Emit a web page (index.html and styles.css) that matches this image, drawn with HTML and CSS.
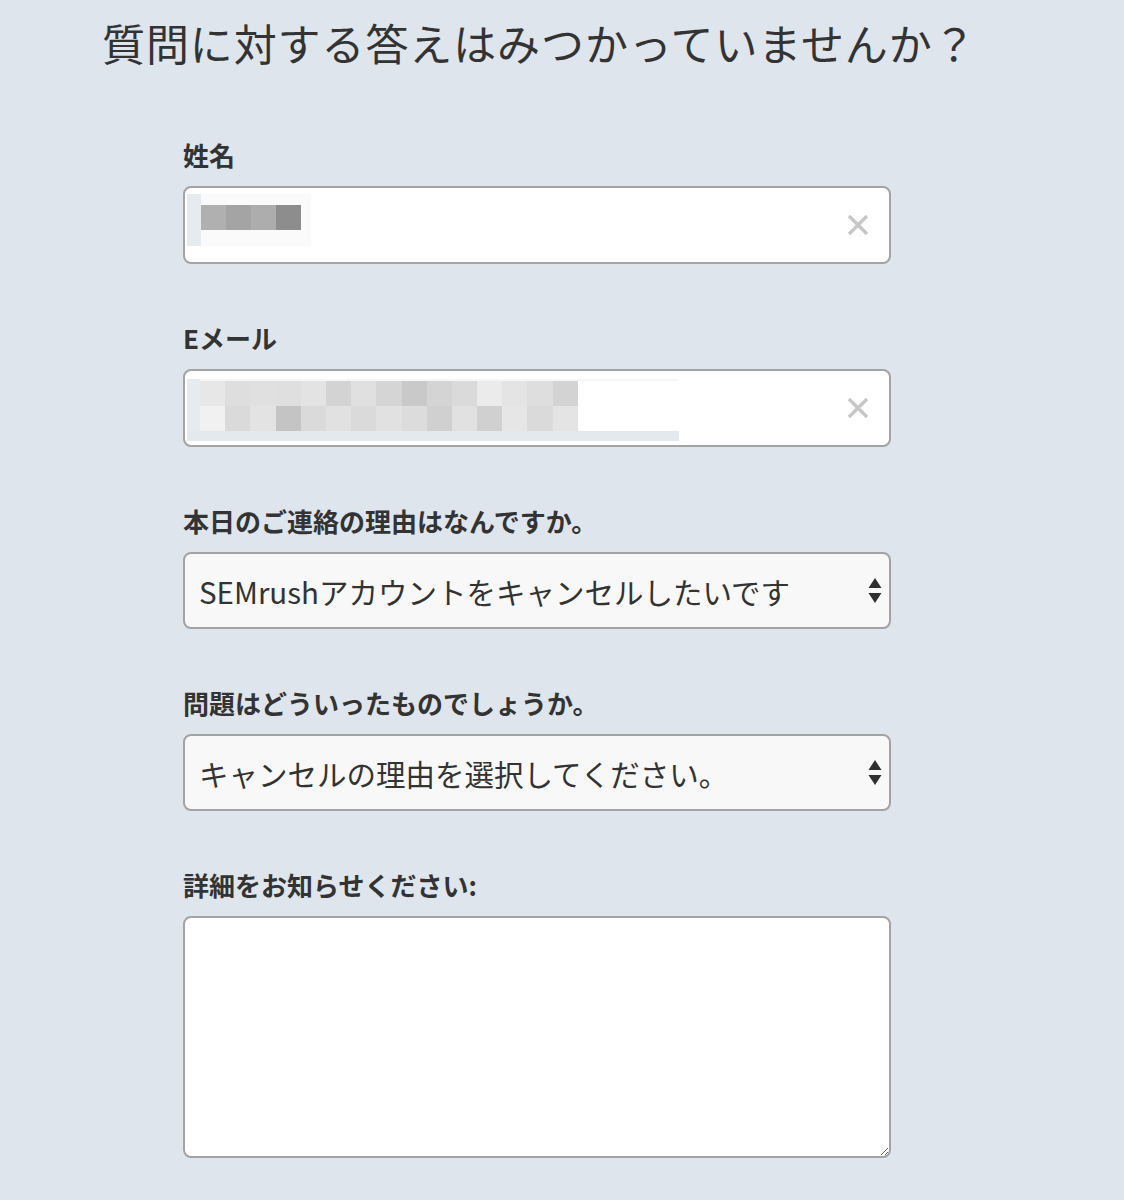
FILE: index.html
```html
<!DOCTYPE html>
<html lang="ja">
<head>
<meta charset="utf-8">
<title>お問い合わせ</title>
<link rel="stylesheet" href="styles.css">
</head>
<body>
<div class="page">
  <h1 class="title">質問に対する答えはみつかっていませんか？</h1>
  <form class="form">
    <div class="field">
      <label class="label">姓名</label>
      <div class="box text-box">
        <div class="redact-name">
          <span class="cell" style="background:#b0b0b0"></span><span class="cell" style="background:#a4a4a4"></span><span class="cell" style="background:#adadad"></span><span class="cell" style="background:#8d8d8d"></span>
        </div>
        <svg class="clear" width="22" height="22" viewBox="0 0 22 22"><path d="M2 2 L20 20 M20 2 L2 20" stroke="#c6c6c6" stroke-width="3.2" stroke-linecap="butt"/></svg>
      </div>
    </div>

    <div class="field">
      <label class="label">Eメール</label>
      <div class="box text-box">
        <div class="redact-mail">
          <div class="mail-row">
            <span class="mc" style="background:#e7e7e7"></span><span class="mc" style="background:#dedede"></span><span class="mc" style="background:#e0e0e0"></span><span class="mc" style="background:#dfdfdf"></span><span class="mc" style="background:#e3e3e3"></span><span class="mc" style="background:#d3d3d3"></span><span class="mc" style="background:#e0e0e0"></span><span class="mc" style="background:#d5d5d5"></span><span class="mc" style="background:#c9c9c9"></span><span class="mc" style="background:#d4d4d4"></span><span class="mc" style="background:#dadada"></span><span class="mc" style="background:#ebebeb"></span><span class="mc" style="background:#e4e4e4"></span><span class="mc" style="background:#dedede"></span><span class="mc" style="background:#d3d3d3"></span>
          </div>
          <div class="mail-row">
            <span class="mc" style="background:#f1f1f1"></span><span class="mc" style="background:#dadada"></span><span class="mc" style="background:#e3e3e3"></span><span class="mc" style="background:#c4c4c4"></span><span class="mc" style="background:#dadada"></span><span class="mc" style="background:#e1e1e1"></span><span class="mc" style="background:#dadada"></span><span class="mc" style="background:#e1e1e1"></span><span class="mc" style="background:#dcdcdc"></span><span class="mc" style="background:#d0d0d0"></span><span class="mc" style="background:#e1e1e1"></span><span class="mc" style="background:#d0d0d0"></span><span class="mc" style="background:#e6e6e6"></span><span class="mc" style="background:#dadada"></span><span class="mc" style="background:#e4e4e4"></span>
          </div>
        </div>
        <svg class="clear" width="22" height="22" viewBox="0 0 22 22"><path d="M2 2 L20 20 M20 2 L2 20" stroke="#c6c6c6" stroke-width="3.2" stroke-linecap="butt"/></svg>
      </div>
    </div>

    <div class="field">
      <label class="label">本日のご連絡の理由はなんですか。</label>
      <div class="select-wrap">
        <select class="box select">
          <option>SEMrushアカウントをキャンセルしたいです</option>
        </select>
        <svg class="arrows" width="14" height="26" viewBox="0 0 14 26"><path d="M7 0 L13.5 10 L0.5 10 Z M0.5 15 L13.5 15 L7 25 Z" fill="#2f2f2f"/></svg>
      </div>
    </div>

    <div class="field">
      <label class="label">問題はどういったものでしょうか。</label>
      <div class="select-wrap">
        <select class="box select">
          <option>キャンセルの理由を選択してください。</option>
        </select>
        <svg class="arrows" width="14" height="26" viewBox="0 0 14 26"><path d="M7 0 L13.5 10 L0.5 10 Z M0.5 15 L13.5 15 L7 25 Z" fill="#2f2f2f"/></svg>
      </div>
    </div>

    <div class="field">
      <label class="label">詳細をお知らせください:</label>
      <textarea class="box textarea"></textarea>
    </div>
  </form>
</div>
</body>
</html>
```

FILE: styles.css
```css
html, body {
  margin: 0;
  padding: 0;
  background: #dee5ed;
}

body {
  font-family: "Noto Sans CJK JP", "Noto Sans", sans-serif;
  color: #333333;
}

.page {
  padding: 12px 0 0 102px;
}

.title {
  margin: 0;
  font-size: 43px;
  line-height: 60px;
  font-weight: 400;
  color: #333333;
  letter-spacing: 0.9px;
}

.form {
  margin: 70px 0 0 81px;
  width: 708px;
  display: flex;
  flex-direction: column;
  gap: 61px;
}

.field {
  display: flex;
  flex-direction: column;
  gap: 18px;
}

.label {
  font-size: 26px;
  line-height: 26px;
  font-weight: 700;
  color: #333333;
}

.box {
  box-sizing: border-box;
  width: 708px;
  border: 2px solid #a3a3a3;
  border-radius: 8px;
  background: #ffffff;
}

.text-box {
  height: 78px;
  display: flex;
  align-items: flex-start;
  padding: 0 20px 0 2px;
}

.clear {
  margin-left: auto;
  align-self: center;
}

.redact-name {
  margin-top: 6px;
  display: flex;
  padding: 11px 10px 16px 14px;
  background: linear-gradient(to right, #e6ebf0 0 14px, #fafafa 14px);
}

.cell {
  width: 25px;
  height: 25px;
}

.redact-mail {
  margin-top: 8px;
  width: 492px;
  padding: 2px 0 10px 13px;
  box-sizing: border-box;
  background: linear-gradient(to right, #e6ebf0 0 13px, transparent 13px),
              linear-gradient(to bottom, #f4f6f8 0 2px, #ffffff 2px);
  position: relative;
}

.redact-mail::after {
  content: "";
  position: absolute;
  left: 0;
  right: 0;
  bottom: 0;
  height: 10px;
  background: #e4e9ee;
}

.mail-row {
  display: flex;
}

.mc {
  width: 25.2px;
  height: 25px;
}

.select-wrap {
  position: relative;
  width: 708px;
}

.select {
  appearance: none;
  -webkit-appearance: none;
  height: 77px;
  background: #f8f8f8;
  font-family: "Noto Sans CJK JP", "Noto Sans", sans-serif;
  font-size: 29.5px;
  color: #333333;
  padding: 0 40px 0 14px;
  outline: none;
  display: block;
}

.arrows {
  position: absolute;
  right: 9px;
  top: 26px;
  pointer-events: none;
}

.textarea {
  display: block;
  height: 242px;
  resize: vertical;
  font-family: "Noto Sans CJK JP", "Noto Sans", sans-serif;
  font-size: 28px;
  padding: 10px 14px;
}
```
